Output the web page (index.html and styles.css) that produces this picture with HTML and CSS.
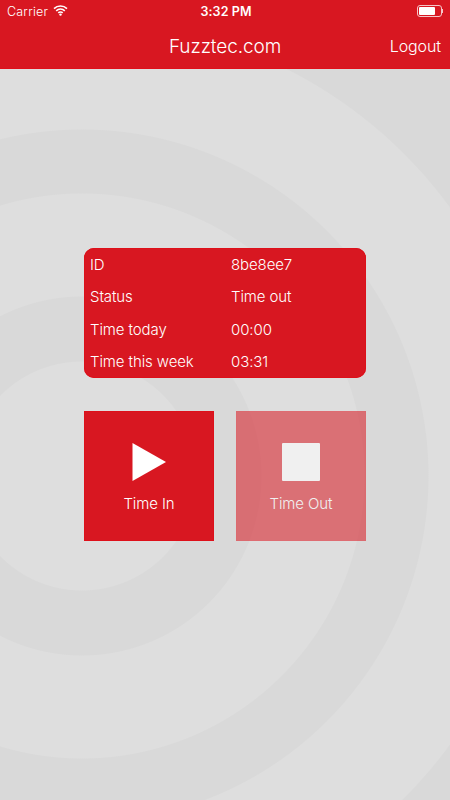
FILE: index.html
```html
<!DOCTYPE html>
<html lang="en">
<head>
    <meta charset="UTF-8">
    <meta name="viewport" content="width=device-width, initial-scale=1.0">
    <title>Fuzztec.com</title>
    <link rel="stylesheet" href="styles.css">
</head>
<body>
    <header class="header">
        <div class="status-bar">
            <div class="status-left">
                <span class="carrier">Carrier</span>
                <svg class="wifi" width="15" height="11" viewBox="0 0 15 11">
                    <path d="M1 3.6 A9.4 9.4 0 0 1 14 3.6" />
                    <path d="M3.2 5.8 A6.2 6.2 0 0 1 11.8 5.8" />
                    <path d="M5.3 7.9 A3.1 3.1 0 0 1 9.7 7.9" />
                    <circle cx="7.5" cy="9.6" r="1.2" />
                </svg>
            </div>
            <div class="status-time">3:32 PM</div>
            <div class="battery">
                <div class="battery-body"><div class="battery-level"></div></div>
                <div class="battery-tip"></div>
            </div>
        </div>
        <nav class="nav">
            <div class="nav-title">Fuzztec.com</div>
            <a class="nav-link" href="#">Logout</a>
        </nav>
    </header>

    <main class="main">
        <div class="info-card">
            <div class="info-label">ID</div>
            <div>8be8ee7</div>
            <div class="info-label">Status</div>
            <div>Time out</div>
            <div class="info-label">Time today</div>
            <div>00:00</div>
            <div class="info-label">Time this week</div>
            <div>03:31</div>
        </div>

        <div class="actions">
            <button class="action">
                <svg class="action-icon" width="36" height="38" viewBox="0 0 36 38">
                    <polygon points="1.5,0 35,19 1.5,38" />
                </svg>
                <span>Time In</span>
            </button>
            <button class="action disabled">
                <span class="stop-icon"></span>
                <span>Time Out</span>
            </button>
        </div>
    </main>
</body>
</html>
```

FILE: styles.css
```css
* {
    box-sizing: border-box;
}
html, body {
    height: 100%;
}
body {
    margin: 0;
    display: flex;
    flex-direction: column;
    overflow: hidden;
    font-family: Inter, "Noto Sans", sans-serif;
    font-weight: 300;
    color: #fff;
    background-color: #dedede;
    /* rings share one centre, stops are the ring radii */
    background-image: radial-gradient(circle at 82px 476px,
        #dedede 114px, #d9d9d9 115px,
        #d9d9d9 179px, #dedede 180px,
        #dedede 282px, #d9d9d9 283px,
        #d9d9d9 346px, #dedede 347px,
        #dedede 455px, #d9d9d9 456px);
}
.header {
    height: 69px;
    background-color: #d81721;
    border-bottom: 1px solid #e0101a;
}
.status-bar {
    height: 22px;
    padding: 1px 7px 0;
    display: grid;
    grid-template-columns: 1fr auto 1fr;
    align-items: center;
    font-size: 12.5px;
}
.status-left {
    display: flex;
    align-items: center;
    gap: 5px;
}
.carrier {
    letter-spacing: 0.2px;
}
.wifi {
    margin-top: -3px;
}
.wifi path {
    fill: none;
    stroke: #fff;
    stroke-width: 1.6;
}
.wifi circle {
    fill: #fff;
}
.status-time {
    font-weight: 600;
    font-size: 12.5px;
    letter-spacing: 0.1px;
    margin-left: 2px;
}
.battery {
    display: flex;
    align-items: center;
    justify-self: end;
    margin-top: -1px;
}
.battery-body {
    width: 25px;
    height: 12px;
    padding: 1px;
    border: 1px solid #f5c5c8;
    border-radius: 3px;
}
.battery-level {
    width: 16px;
    height: 100%;
    background-color: #fff;
    border-radius: 1px;
}
.battery-tip {
    width: 1.5px;
    height: 4px;
    background-color: #f5c5c8;
}
.nav {
    height: 46px;
    position: relative;
    display: flex;
    align-items: center;
    justify-content: center;
    padding-top: 2px;
}
.nav-title {
    font-size: 19px;
    letter-spacing: -0.1px;
}
.nav-link {
    position: absolute;
    right: 9px;
    top: 14px;
    font-size: 16px;
    letter-spacing: -0.1px;
    color: #fff;
    text-decoration: none;
}
.main {
    flex: 1;
    padding: 179px 84px 0;
}
.info-card {
    height: 130px;
    display: grid;
    grid-template-columns: 141px 1fr;
    grid-auto-rows: 1fr;
    align-items: center;
    padding: 0 6px;
    font-size: 15px;
    letter-spacing: -0.1px;
    background-color: #d81721;
    box-shadow: inset 0 0 0 1px #de101a;
    border-radius: 10px;
}
.actions {
    display: flex;
    gap: 22px;
    margin-top: 33px;
}
.action {
    width: 130px;
    height: 130px;
    padding: 31px 0 0;
    display: flex;
    flex-direction: column;
    align-items: center;
    font-family: inherit;
    font-weight: 300;
    font-size: 15px;
    letter-spacing: -0.1px;
    color: #fff;
    background-color: #d81721;
    border: 1px solid #de101a;
}
.action.disabled {
    opacity: 0.55;
}
.action-icon {
    fill: #fff;
    margin-bottom: 13px;
}
.stop-icon {
    width: 38px;
    height: 38px;
    margin-bottom: 13px;
    background-color: #fff;
    border-radius: 1px;
}
```
